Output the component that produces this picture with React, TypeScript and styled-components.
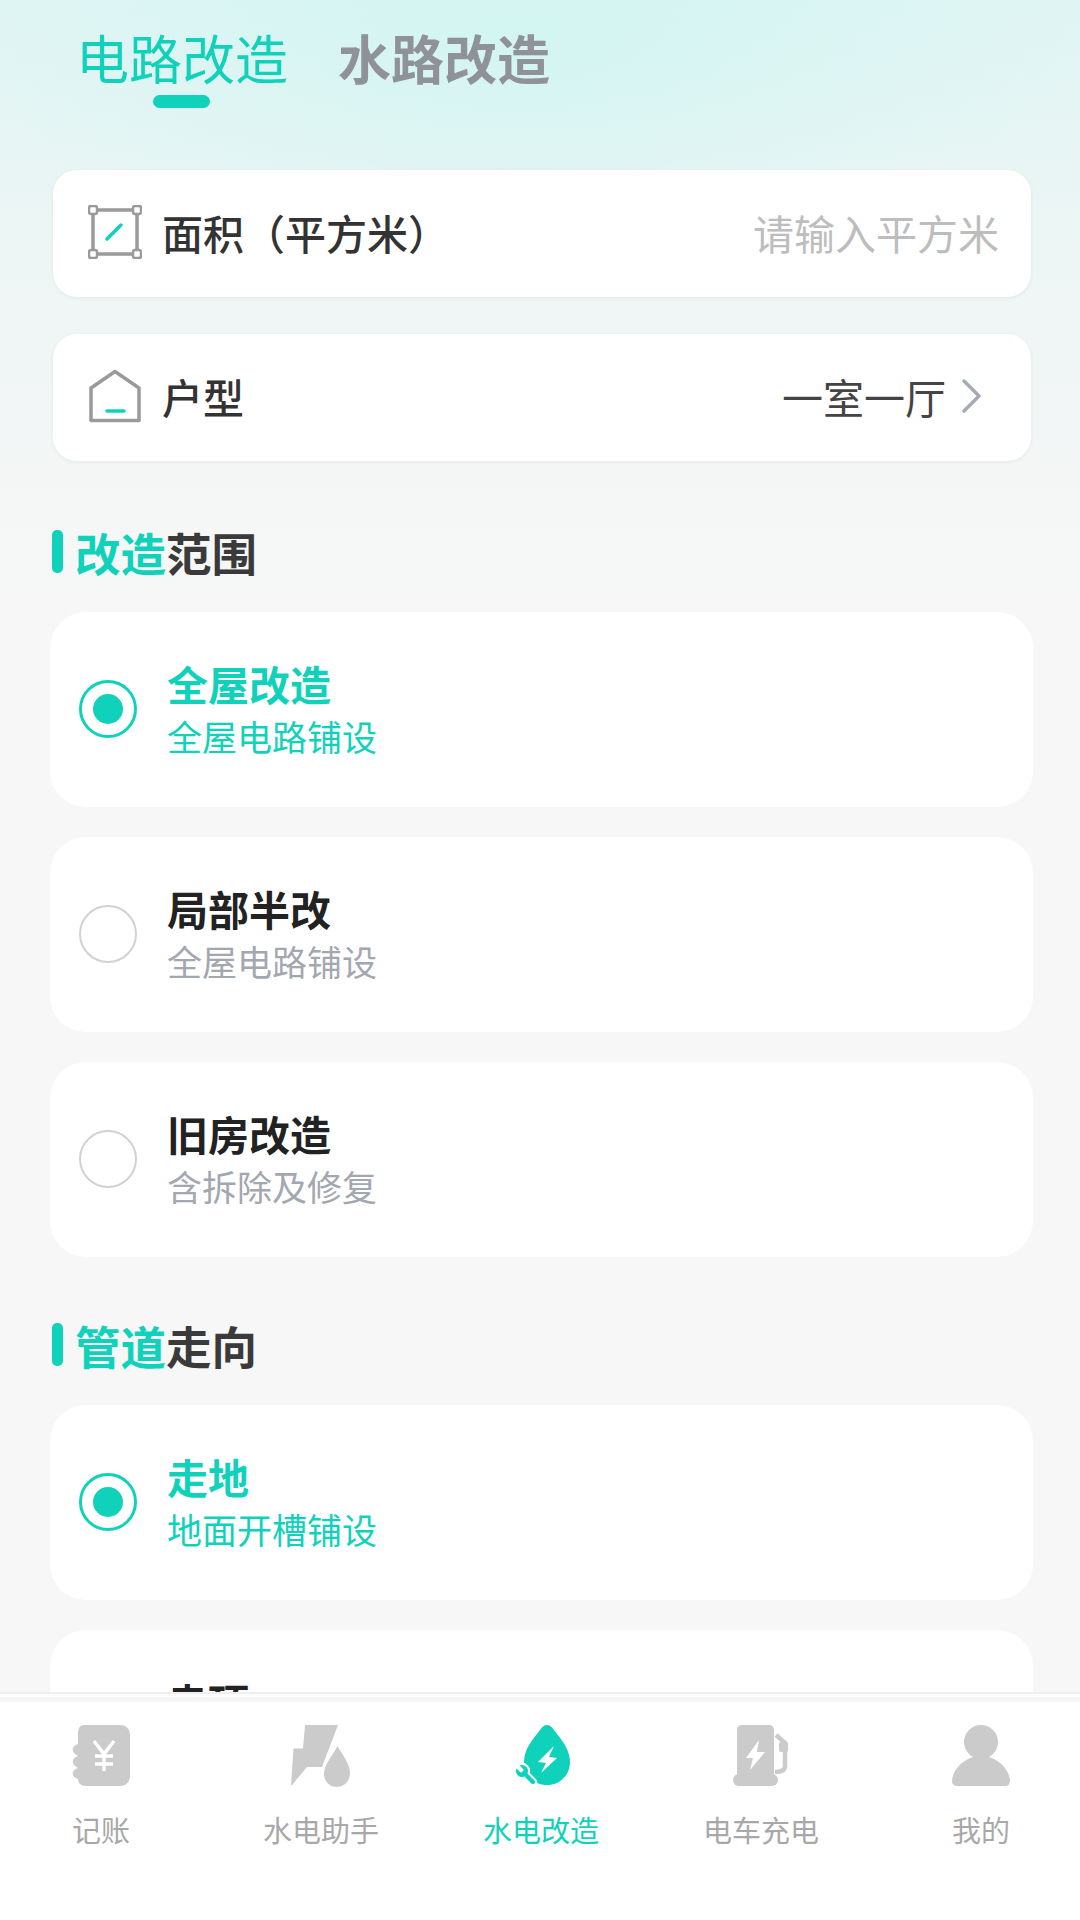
import React from 'react'
import styled, { createGlobalStyle } from 'styled-components'

const accent = '#10d2ba'
const iconGray = '#cbcbcb'

const GlobalStyle = createGlobalStyle`
  html, body {
    margin: 0;
    padding: 0;
    background: #f7f7f7;
  }
  * {
    box-sizing: border-box;
  }
`

const Page = styled.div`
  width: 1080px;
  height: 1920px;
  display: flex;
  flex-direction: column;
  overflow: hidden;
  font-family: 'Noto Sans CJK SC', 'Noto Sans', sans-serif;
  background:
    radial-gradient(ellipse 560px 230px at 520px 40px, rgba(205, 245, 241, 0.7), rgba(205, 245, 241, 0)),
    linear-gradient(180deg, #dff5f3 0, #e7f5f4 140px, #eff6f5 300px, #f4f6f6 470px, #f7f7f7 620px);
`

const Content = styled.main`
  flex: 1;
  min-height: 0;
  overflow: hidden;
  padding: 0 47px 0 50px;
`

const Tabs = styled.div`
  display: flex;
  gap: 50px;
  padding: 24px 0 0 26px;
  height: 170px;
`

const Tab = styled.div<{ $active?: boolean }>`
  position: relative;
  height: 66px;
  font-size: 53px;
  line-height: 66px;
  font-weight: ${({ $active }) => ($active ? 400 : 700)};
  color: ${({ $active }) => ($active ? accent : '#8f9299')};
`

const TabMark = styled.span`
  position: absolute;
  left: 77px;
  bottom: -18px;
  width: 57px;
  height: 13px;
  border-radius: 7px;
  background: ${accent};
`

const Fields = styled.div`
  display: flex;
  flex-direction: column;
  gap: 37px;
  margin: 0 2px 33px 3px;
`

const FieldCard = styled.div`
  display: flex;
  align-items: center;
  height: 127px;
  padding: 0 32px 3px 35px;
  border-radius: 24px;
  background: #fff;
  box-shadow: 0 1px 4px rgba(0, 0, 0, 0.06);
`

const FieldLabel = styled.span`
  flex: 1;
  margin-left: 20px;
  font-size: 41px;
  font-weight: 500;
  color: #333;
`

const Placeholder = styled.span`
  font-size: 41px;
  color: #bdbdbd;
`

const FieldValue = styled.span`
  font-size: 41px;
  color: #444;
`

const Chevron = styled.svg`
  width: 24px;
  height: 38px;
  margin: 0 15px 0 14px;
`

const FieldIcon = styled.svg`
  flex: none;
  width: 54px;
  height: 54px;
`

const SectionTitle = styled.h2`
  display: flex;
  align-items: center;
  margin: 0;
  height: 118px;
  padding-bottom: 3px;
  font-size: 45.5px;
  line-height: 60px;
  font-weight: 700;
  color: #3a3a3a;
`

const SectionMark = styled.i`
  width: 11px;
  height: 43px;
  margin: 0 12px 0 2px;
  border-radius: 5px;
  background: ${accent};
`

const SectionAccent = styled.span`
  color: ${accent};
`

const Option = styled.div`
  display: flex;
  align-items: center;
  height: 195px;
  margin-bottom: 30px;
  padding: 0 0 1px 29px;
  border-radius: 36px;
  background: #fff;
`

const Radio = styled.span<{ $checked?: boolean }>`
  display: flex;
  align-items: center;
  justify-content: center;
  flex: none;
  width: 58px;
  height: 58px;
  border-radius: 50%;
  border: ${({ $checked }) => ($checked ? `3px solid ${accent}` : '2.5px solid #d2d2d2')};

  &::after {
    content: '';
    display: ${({ $checked }) => ($checked ? 'block' : 'none')};
    width: 30px;
    height: 30px;
    border-radius: 50%;
    background: ${accent};
  }
`

const OptionText = styled.div`
  margin-left: 30px;
`

const OptionTitle = styled.div<{ $checked?: boolean }>`
  font-size: 41px;
  line-height: 52px;
  font-weight: 700;
  color: ${({ $checked }) => ($checked ? accent : '#222')};
`

const OptionSub = styled.div<{ $checked?: boolean }>`
  margin-top: 2px;
  font-size: 35px;
  line-height: 50px;
  color: ${({ $checked }) => ($checked ? accent : '#a3a7b0')};
`

const TabBar = styled.nav`
  display: grid;
  flex: none;
  grid-template-columns: repeat(5, 220px);
  justify-content: center;
  height: 228px;
  padding: 32px 0 0 2px;
  background: linear-gradient(180deg, #efefef 0 2px, #fdfdfd 2px 5px, #f5f5f5 5px 9px, #fff 11px);
`

const NavItem = styled.div<{ $active?: boolean }>`
  display: flex;
  flex-direction: column;
  align-items: center;
  font-size: 29px;
  line-height: 42px;
  color: ${({ $active }) => ($active ? accent : '#a8a8a8')};
`

const NavIcon = styled.svg`
  width: 64px;
  height: 64px;
  margin-bottom: 20px;
  overflow: visible;
`

const AreaIcon = () => (
  <FieldIcon viewBox="0 0 54 54" fill="none">
    <rect x="5" y="5" width="44" height="44" stroke="#9a9a9a" strokeWidth="3.5" />
    {[5, 49].map((x) =>
      [5, 49].map((y) => (
        <rect key={`${x}-${y}`} x={x - 4} y={y - 4} width="8" height="8" rx="2" fill="#fff" stroke="#9a9a9a" strokeWidth="2.5" />
      )),
    )}
    <path d="M19 34 L33 20" stroke={accent} strokeWidth="3.5" strokeLinecap="round" />
  </FieldIcon>
)

const HouseIcon = () => (
  <FieldIcon viewBox="0 0 54 54" fill="none">
    <path d="M3 19 L27 2.5 L51 19 V51.5 H3 Z" stroke="#9a9a9a" strokeWidth="3.5" strokeLinejoin="round" />
    <path d="M19 42 H36" stroke={accent} strokeWidth="3.5" strokeLinecap="round" />
  </FieldIcon>
)

const BillIcon = () => (
  <NavIcon viewBox="0 0 64 64">
    <path
      fill={iconGray}
      d="M15 1 H51 C57 1 61 5 61 11 V52 C61 58 57 62 51 62 H17 C12 62 9 59 9 55 C5 54 3 51 4 48 C5 46 6 45 9 44 C5 42 3 39 4 36 C5 34 6 33 9 32 C5 30 3 27 4 24 C5 22 6 21 9 20 V9 C9 4 11 1 15 1 Z"
    />
    <path d="M25 17 L35 30 L45 17 M35 30 V47 M26 32 H44 M26 40 H44" stroke="#fff" strokeWidth="3.5" fill="none" />
  </NavIcon>
)

const HelperIcon = () => (
  <NavIcon viewBox="0 0 64 64">
    <path fill={iconGray} d="M16 1 H49 L33 43 H18 L3 61 H2 L4.5 24.5 H14 Z" />
    <path fill={iconGray} d="M48.5 22 C52 29 61 39 61 49 C61 57 55 63 48 63 C40 63 35 57 35 50 C35 40 45 30 48.5 22 Z" />
  </NavIcon>
)

const RenovateIcon = () => (
  <NavIcon viewBox="0 0 64 64">
    <path
      fill={accent}
      d="M38 1 C41 1 43 3 45 6 C52 15 61 25 61 38 C61 51 51 61 38 61 C25 61 15 51 15 38 C15 25 24 15 31 6 C33 3 35 1 38 1 Z"
    />
    <path fill="#fff" d="M45 22 L29 38 L37 39 L32 49 L48 34 L40 33 Z" />
    <g transform="translate(29 39) scale(-1 1)">
      <path
        fill={accent}
        stroke="#fff"
        strokeWidth="4"
        paintOrder="stroke"
        d="M14.7 6.3a1 1 0 0 0 0 1.4l1.6 1.6a1 1 0 0 0 1.4 0l3.77-3.77a6 6 0 0 1-7.94 7.94l-6.91 6.91a2.12 2.12 0 0 1-3-3l6.91-6.91a6 6 0 0 1 7.94-7.94l-3.76 3.76z"
      />
    </g>
  </NavIcon>
)

const ChargeIcon = () => (
  <NavIcon viewBox="0 0 64 64">
    <path fill={iconGray} d="M13 1 H40 C43 1 45 3 45 6 V52 H8 V6 C8 3 10 1 13 1 Z" />
    <rect x="4" y="50" width="45" height="12" rx="6" fill={iconGray} />
    <path fill="none" stroke={iconGray} strokeWidth="4.5" d="M47 11 L56 19 V42 C56 46 52 48 46 48" />
    <rect x="50" y="18" width="9" height="10" rx="2" fill={iconGray} />
    <path fill="#fff" d="M30 16 L17 34 H24 L21 46 L36 28 H28 Z" />
  </NavIcon>
)

const MineIcon = () => (
  <NavIcon viewBox="0 0 64 64">
    <circle cx="32" cy="18" r="17" fill={iconGray} />
    <path fill={iconGray} d="M32 32 C46 32 60 43 61 57 C61 60 59 62 56 62 H8 C5 62 3 60 3 57 C4 43 18 32 32 32 Z" />
  </NavIcon>
)

const scope = [
  { title: '全屋改造', sub: '全屋电路铺设', checked: true },
  { title: '局部半改', sub: '全屋电路铺设' },
  { title: '旧房改造', sub: '含拆除及修复' },
]

const route = [
  { title: '走地', sub: '地面开槽铺设', checked: true },
  { title: '走顶', sub: '吊顶内铺设' },
]

const nav = [
  { label: '记账', icon: <BillIcon /> },
  { label: '水电助手', icon: <HelperIcon /> },
  { label: '水电改造', icon: <RenovateIcon />, active: true },
  { label: '电车充电', icon: <ChargeIcon /> },
  { label: '我的', icon: <MineIcon /> },
]

const OptionRow = ({ title, sub, checked }: { title: string; sub: string; checked?: boolean }) => (
  <Option>
    <Radio $checked={checked} />
    <OptionText>
      <OptionTitle $checked={checked}>{title}</OptionTitle>
      <OptionSub $checked={checked}>{sub}</OptionSub>
    </OptionText>
  </Option>
)

export default function App() {
  return (
    <Page>
      <GlobalStyle />
      <Content>
        <Tabs>
          <Tab $active>
            电路改造
            <TabMark />
          </Tab>
          <Tab>水路改造</Tab>
        </Tabs>

        <Fields>
          <FieldCard>
            <AreaIcon />
            <FieldLabel>面积（平方米）</FieldLabel>
            <Placeholder>请输入平方米</Placeholder>
          </FieldCard>
          <FieldCard>
            <HouseIcon />
            <FieldLabel>户型</FieldLabel>
            <FieldValue>一室一厅</FieldValue>
            <Chevron viewBox="0 0 24 38" fill="none">
              <path d="M4 4 L19 19 L4 34" stroke="#a5abb5" strokeWidth="3.5" strokeLinecap="round" strokeLinejoin="round" />
            </Chevron>
          </FieldCard>
        </Fields>

        <SectionTitle>
          <SectionMark />
          <SectionAccent>改造</SectionAccent>范围
        </SectionTitle>
        {scope.map((item) => (
          <OptionRow key={item.title} {...item} />
        ))}

        <SectionTitle>
          <SectionMark />
          <SectionAccent>管道</SectionAccent>走向
        </SectionTitle>
        {route.map((item) => (
          <OptionRow key={item.title} {...item} />
        ))}
      </Content>

      <TabBar>
        {nav.map((item) => (
          <NavItem key={item.label} $active={item.active}>
            {item.icon}
            {item.label}
          </NavItem>
        ))}
      </TabBar>
    </Page>
  )
}
